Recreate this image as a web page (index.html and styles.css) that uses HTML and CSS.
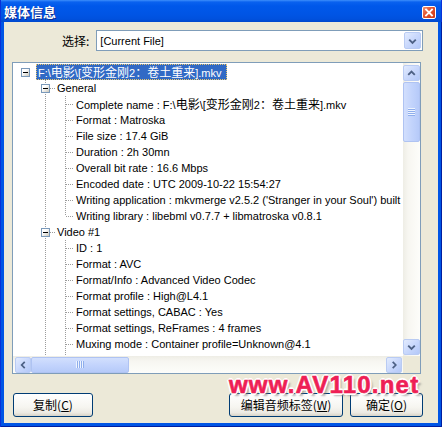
FILE: index.html
```html
<!DOCTYPE html>
<html>
<head>
<meta charset="utf-8">
<title>媒体信息</title>
<link rel="stylesheet" href="styles.css">
</head>
<body>
<div class="window">
  <div class="titlebar">
    <span class="title">媒体信息</span>
    <span class="close"><svg width="12" height="11" viewBox="0 0 12 11"><path d="M3 2.5 L9 8.5 M9 2.5 L3 8.5" stroke="#fff" stroke-width="1.8" stroke-linecap="square"/></svg></span>
  </div>
  <div class="frame">
    <div class="client">
      <div class="toprow">
        <span class="sel-label">选择:</span>
        <div class="combo">
          <span class="combo-text">[Current File]</span>
          <span class="sbtn dd"><svg width="16" height="16" viewBox="0 0 16 16"><polyline points="4.5,6.5 8,10 11.5,6.5" fill="none" stroke="#4D6185" stroke-width="2"/></svg></span>
        </div>
      </div>
      <div class="treebox">
        <div class="view">
          <div class="row r0"><span class="tg"></span><span class="lb sel">F:\<span class="c">电影</span>\[<span class="c">变形金刚</span>2<span class="c">：卷土重来</span>].mkv</span></div>
          <div class="kids1">
            <div class="row r1"><span class="tg"></span><span class="lb">General</span></div>
            <div class="kids2 last">
              <div class="row r2"><span class="lb">Complete name : F:\<span class="c">电影</span>\[<span class="c">变形金刚</span>2<span class="c">：卷土重来</span>].mkv</span></div>
              <div class="row r2"><span class="lb">Format : Matroska</span></div>
              <div class="row r2"><span class="lb">File size : 17.4 GiB</span></div>
              <div class="row r2"><span class="lb">Duration : 2h 30mn</span></div>
              <div class="row r2"><span class="lb">Overall bit rate : 16.6 Mbps</span></div>
              <div class="row r2"><span class="lb">Encoded date : UTC 2009-10-22 15:54:27</span></div>
              <div class="row r2"><span class="lb">Writing application : mkvmerge v2.5.2 ('Stranger in your Soul') built on Feb 28 2009 16:38:39</span></div>
              <div class="row r2"><span class="lb">Writing library : libebml v0.7.7 + libmatroska v0.8.1</span></div>
            </div>
            <div class="row r1"><span class="tg"></span><span class="lb">Video #1</span></div>
            <div class="kids2">
              <div class="row r2"><span class="lb">ID : 1</span></div>
              <div class="row r2"><span class="lb">Format : AVC</span></div>
              <div class="row r2"><span class="lb">Format/Info : Advanced Video Codec</span></div>
              <div class="row r2"><span class="lb">Format profile : High@L4.1</span></div>
              <div class="row r2"><span class="lb">Format settings, CABAC : Yes</span></div>
              <div class="row r2"><span class="lb">Format settings, ReFrames : 4 frames</span></div>
              <div class="row r2"><span class="lb">Muxing mode : Container profile=Unknown@4.1</span></div>
              <div class="row r2"><span class="lb">Codec ID : V_MPEG4/ISO/AVC</span></div>
              <div class="row r2"><span class="lb">Duration : 2h 30mn</span></div>
            </div>
          </div>
        </div>
        <div class="vscroll">
          <span class="sbtn"><svg width="16" height="16" viewBox="0 0 16 16"><polyline points="4.5,10 8,6.5 11.5,10" fill="none" stroke="#4D6185" stroke-width="2"/></svg></span>
          <span class="thumb vthumb"></span>
          <span class="sbtn down"><svg width="16" height="16" viewBox="0 0 16 16"><polyline points="4.5,6.5 8,10 11.5,6.5" fill="none" stroke="#4D6185" stroke-width="2"/></svg></span>
        </div>
        <div class="hscroll">
          <span class="sbtn"><svg width="16" height="16" viewBox="0 0 16 16"><polyline points="10,4.5 6.5,8 10,11.5" fill="none" stroke="#4D6185" stroke-width="2"/></svg></span>
          <span class="thumb hthumb"></span>
          <span class="sbtn right"><svg width="16" height="16" viewBox="0 0 16 16"><polyline points="6.5,4.5 10,8 6.5,11.5" fill="none" stroke="#4D6185" stroke-width="2"/></svg></span>
        </div>
        <div class="corner"></div>
      </div>
      <div class="buttons">
        <button class="btn b-copy">复制(<u>C</u>)</button>
        <div class="btn-group">
          <button class="btn b-edit">编辑音频标签(<u>W</u>)</button>
          <button class="btn b-ok">确定(<u>O</u>)</button>
        </div>
      </div>
      <div class="watermark">www.AV110.net</div>
    </div>
  </div>
</div>
</body>
</html>
```
FILE: styles.css
```css
html, body {
  margin: 0;
  padding: 0;
}
body {
  width: 442px;
  height: 427px;
  overflow: hidden;
  background: #ECE9D8;
}
.window {
  width: 442px;
  height: 427px;
  display: flex;
  flex-direction: column;
  font-family: "Liberation Sans", "Noto Sans CJK SC", sans-serif;
}
.titlebar {
  height: 22px;
  flex: none;
  display: flex;
  align-items: center;
  padding-left: 4px;
  background: linear-gradient(to bottom, #3D8FFB 0px, #0A62EF 2px, #0058EA 6px, #0055E5 14px, #0051DE 19px, #0048CC 22px);
  box-shadow: inset 1px 0 #0831D9, inset -1px 0 #0831D9;
}
.title {
  font: bold 13px/16px "Noto Sans CJK SC", sans-serif;
  color: #fff;
  text-shadow: 1px 1px 0 #0B2A8C;
  margin-top: 1px;
}
.close {
  margin-left: auto;
  margin-right: 6px;
  margin-top: 2px;
  width: 14px;
  height: 13px;
  box-sizing: border-box;
  border: 1px solid #fff;
  border-radius: 2px;
  background: linear-gradient(135deg, #F09070 0%, #E0522E 45%, #CC3A14 100%);
  display: flex;
  align-items: center;
  justify-content: center;
}
.close svg { display: block; }
.frame {
  flex: 1;
  background: #0055E5;
  padding: 0 4px 4px;
  box-shadow: inset 1px 0 #0831D9, inset -1px 0 #001EA0, inset 0 -1px #001EA0;
  display: flex;
}
.client {
  flex: 1;
  background: #ECE9D8;
  padding: 8px 15px 0 8px;
  display: flex;
  flex-direction: column;
  position: relative;
}
.toprow {
  height: 21px;
  display: flex;
  align-items: center;
}
.sel-label {
  margin-left: 50px;
  margin-right: 7px;
  font: 12px/16px "Noto Sans CJK SC", sans-serif;
  color: #000;
}
.combo {
  flex: 1;
  height: 21px;
  box-sizing: border-box;
  border: 1px solid #7F9DB9;
  background: #fff;
  display: flex;
  align-items: center;
  padding: 1px;
}
.combo-text {
  padding-left: 2px;
  font-size: 11px;
  color: #000;
}
.sbtn {
  width: 17px;
  height: 17px;
  flex: none;
  box-sizing: border-box;
  border: 1px solid #B9CBF3;
  border-radius: 2px;
  background: linear-gradient(135deg, #E2EBFE 0%, #C9D8FC 50%, #B3C8F8 100%);
  display: flex;
  align-items: center;
  justify-content: center;
}
.sbtn svg { display: block; }
.dd { margin-left: auto; }
.treebox {
  margin-top: 11px;
  margin-right: 2px;
  height: 312px;
  box-sizing: border-box;
  border: 1px solid #7F9DB9;
  background: #fff;
  display: grid;
  grid-template-columns: 1fr 17px;
  grid-template-rows: 1fr 17px;
  flex: none;
}
.view {
  overflow: hidden;
  padding-top: 1px;
  font-size: 11px;
  color: #000;
  min-width: 0;
  min-height: 0;
}
.row {
  height: 16px;
  display: flex;
  align-items: flex-start;
  white-space: nowrap;
}
.lb {
  display: inline-block;
  height: 16px;
  line-height: 16px;
  padding: 0 2px;
  box-sizing: border-box;
}
.c {
  font-family: "Noto Sans CJK SC", sans-serif;
  font-size: 12px;
  line-height: 16px;
}
.sel {
  background: #316AC5;
  color: #fff;
  outline: 1px dotted #E9C66A;
  outline-offset: -1px;
  padding-right: 6px;
}
.tg {
  width: 9px;
  height: 9px;
  flex: none;
  box-sizing: border-box;
  margin-top: 4px;
  border: 1px solid #7A99BA;
  background:
    linear-gradient(#000, #000) center / 5px 1px no-repeat,
    linear-gradient(135deg, #fff 35%, #C9C6BA 100%);
}
.r0 { padding-left: 8px; }
.r0 .lb { margin-left: 6px; }
.r1 {
  padding-left: 28px;
  background: repeating-linear-gradient(to right, #9C9C9C 0 1px, transparent 1px 2px) 37px 8px / 5px 1px no-repeat;
}
.r1 .lb { margin-left: 5px; }
.r2 {
  padding-left: 61px;
  background: repeating-linear-gradient(to right, #9C9C9C 0 1px, transparent 1px 2px) 53px 8px / 8px 1px no-repeat;
}
.kids1 {
  background: repeating-linear-gradient(to bottom, #9C9C9C 0 1px, transparent 1px 2px) 32px 0 / 1px 100% no-repeat;
}
.kids2 {
  background: repeating-linear-gradient(to bottom, #9C9C9C 0 1px, transparent 1px 2px) 52px 0 / 1px 100% no-repeat;
}
.kids2.last {
  background-size: 1px calc(100% - 8px);
}
.vscroll {
  display: flex;
  flex-direction: column;
  padding: 2px 0 1px;
  background: linear-gradient(to right, #EEEDE5 0%, #F7F6F1 30%, #FDFDFA 100%);
}
.vscroll .sbtn { height: 16px; }
.thumb {
  box-sizing: border-box;
  border: 1px solid #AFC3F2;
  border-radius: 2px;
}
.vthumb {
  height: 60px;
  margin-top: 1px;
  background:
    repeating-linear-gradient(to bottom, #EEF4FE 0 1px, #8FAEEC 1px 2px) center / 7px 8px no-repeat,
    linear-gradient(to right, #D2DFFD 0%, #C3D4FC 50%, #B6CAF9 100%);
}
.down { margin-top: auto; }
.hscroll {
  display: flex;
  align-items: center;
  padding: 0 1px 0 2px;
  background: linear-gradient(to bottom, #EEEDE5 0%, #F7F6F1 30%, #FDFDFA 100%);
}
.hscroll .sbtn { width: 16px; height: 16px; }
.hthumb {
  width: 98px;
  height: 16px;
  background:
    repeating-linear-gradient(to right, #EEF4FE 0 1px, #8FAEEC 1px 2px) center / 8px 7px no-repeat,
    linear-gradient(to bottom, #D2DFFD 0%, #C3D4FC 50%, #B6CAF9 100%);
}
.right { margin-left: auto; }
.corner { background: #ECE9D8; }
.buttons {
  margin-top: 19px;
  height: 24px;
  display: flex;
  justify-content: space-between;
  flex: none;
}
.btn-group {
  display: flex;
  gap: 7px;
}
.btn {
  height: 24px;
  box-sizing: border-box;
  border: 1px solid #003C74;
  border-radius: 3px;
  background: linear-gradient(to bottom, #FFFFFF 0%, #F6F5F0 60%, #ECEAE3 85%, #D8D3C7 100%);
  font: 12px/16px "Noto Sans CJK SC", sans-serif;
  color: #000;
  padding: 0;
  margin: 0;
}
.b-copy { width: 80px; margin-left: 1px; }
.b-edit { width: 114px; }
.b-ok { width: 73px; }
.watermark {
  position: absolute;
  left: 225px;
  top: 351px;
  font: bold 24px/24px "Liberation Sans", sans-serif;
  letter-spacing: 1.2px;
  color: #EE1F55;
  -webkit-text-stroke: 0.6px #EE1F55;
  text-shadow:
    1px 0 #fff, -1px 0 #fff, 0 1px #fff, 0 -1px #fff,
    1px 1px #fff, -1px -1px #fff, 1px -1px #fff, -1px 1px #fff,
    2px 0 #fff, -2px 0 #fff, 0 2px #fff, 0 -2px #fff,
    3px 3px 2px rgba(120, 120, 120, 0.55);
  white-space: nowrap;
}
```
